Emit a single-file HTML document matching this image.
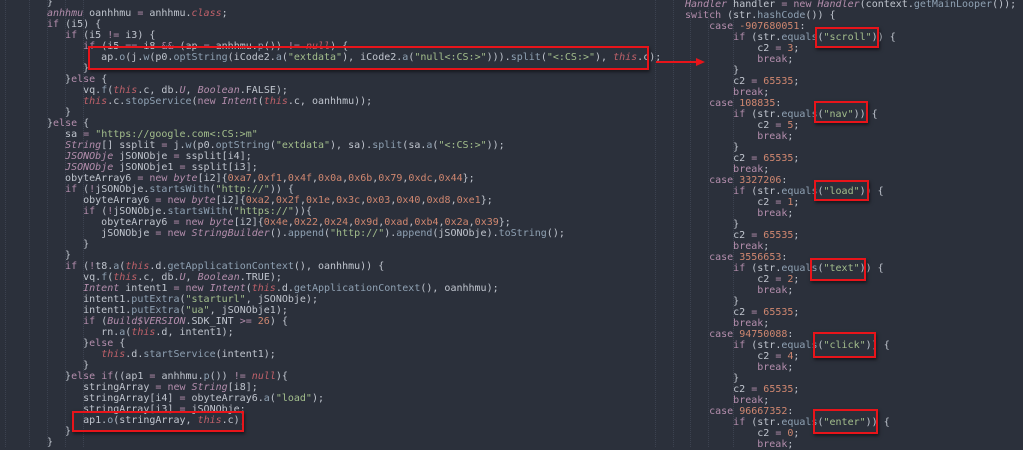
<!DOCTYPE html>
<html><head><meta charset="utf-8"><style>
html,body{margin:0;padding:0;width:1023px;height:447px;overflow:hidden;background:#2b303b;}
pre{position:absolute;margin:0;font-family:"DejaVu Sans Mono","Liberation Mono",monospace;font-size:10px;line-height:11px;color:#c0c5ce;white-space:pre;}
.k{color:#b48ead}.t{color:#b48ead;font-style:italic}.r{color:#bf616a;font-style:italic}.m{color:#8fa1b3}.s{color:#a3be8c}.n{color:#d08770}.o{color:#b48ead}
.box{position:absolute;border:2px solid #e8141a;box-sizing:border-box;box-shadow:1px 2px 3px rgba(0,0,0,.5);}
.g{position:absolute;top:0;height:447px;border-left:1px dotted #3c4250;}
</style></head><body>
<div class="g" style="left:5px"></div><div class="g" style="left:29px"></div><div class="g" style="left:47px"></div><div class="g" style="left:65px"></div><div class="g" style="left:83px"></div>
<div class="g" style="left:655px"></div><div class="g" style="left:673px"></div><div class="g" style="left:690px"></div><div class="g" style="left:708px"></div><div class="g" style="left:733px"></div>
<pre style="left:47px;top:-3px">}
<span class="t">anhhmu</span> oanhhmu <span class="o">=</span> anhhmu.<span class="r">class</span>;
<span class="k">if</span> (i5) {
   <span class="k">if</span> (i5 <span class="o">!=</span> i3) {
      <span class="k">if</span> (i5 <span class="o">==</span> i8 <span class="o">&amp;&amp;</span> (ap <span class="o">=</span> anhhmu.<span class="m">p</span>()) <span class="o">!=</span> <span class="r">null</span>) {
         ap.<span class="m">o</span>(j.<span class="m">w</span>(p0.<span class="m">optString</span>(iCode2.<span class="m">a</span>(<span class="s">"extdata"</span>), iCode2.<span class="m">a</span>(<span class="s">"null&lt;:CS:&gt;"</span>))).<span class="m">split</span>(<span class="s">"&lt;:CS:&gt;"</span>), <span class="r">this</span>.c);
      }
   }<span class="k">else</span> {
      vq.<span class="m">f</span>(<span class="r">this</span>.c, db.<span class="t">U</span>, <span class="t">Boolean</span>.FALSE);
      <span class="r">this</span>.c.<span class="m">stopService</span>(<span class="k">new</span> <span class="t">Intent</span>(<span class="r">this</span>.c, oanhhmu));
   }
}<span class="k">else</span> {
   sa <span class="o">=</span> <span class="s">"https://google.com&lt;:CS:&gt;m"</span>
   <span class="t">String</span>[] ssplit <span class="o">=</span> j.<span class="m">w</span>(p0.<span class="m">optString</span>(<span class="s">"extdata"</span>), sa).<span class="m">split</span>(sa.<span class="m">a</span>(<span class="s">"&lt;:CS:&gt;"</span>));
   <span class="t">JSONObje</span> jSONObje <span class="o">=</span> ssplit[i4];
   <span class="t">JSONObje</span> jSONObje1 <span class="o">=</span> ssplit[i3];
   obyteArray6 <span class="o">=</span> <span class="k">new</span> <span class="t">byte</span>[i2]{<span class="n">0xa7</span>,<span class="n">0xf1</span>,<span class="n">0x4f</span>,<span class="n">0x0a</span>,<span class="n">0x6b</span>,<span class="n">0x79</span>,<span class="n">0xdc</span>,<span class="n">0x44</span>};
   <span class="k">if</span> (<span class="o">!</span>jSONObje.<span class="m">startsWith</span>(<span class="s">"http://"</span>)) {
      obyteArray6 <span class="o">=</span> <span class="k">new</span> <span class="t">byte</span>[i2]{<span class="n">0xa2</span>,<span class="n">0x2f</span>,<span class="n">0x1e</span>,<span class="n">0x3c</span>,<span class="n">0x03</span>,<span class="n">0x40</span>,<span class="n">0xd8</span>,<span class="n">0xe1</span>};
      <span class="k">if</span> (<span class="o">!</span>jSONObje.<span class="m">startsWith</span>(<span class="s">"https://"</span>)){
         obyteArray6 <span class="o">=</span> <span class="k">new</span> <span class="t">byte</span>[i2]{<span class="n">0x4e</span>,<span class="n">0x22</span>,<span class="n">0x24</span>,<span class="n">0x9d</span>,<span class="n">0xad</span>,<span class="n">0xb4</span>,<span class="n">0x2a</span>,<span class="n">0x39</span>};
         jSONObje <span class="o">=</span> <span class="k">new</span> <span class="t">StringBuilder</span>().<span class="m">append</span>(<span class="s">"http://"</span>).<span class="m">append</span>(jSONObje).<span class="m">toString</span>();
      }
   }
   <span class="k">if</span> (<span class="o">!</span>t8.<span class="m">a</span>(<span class="r">this</span>.d.<span class="m">getApplicationContext</span>(), oanhhmu)) {
      vq.<span class="m">f</span>(<span class="r">this</span>.c, db.<span class="t">U</span>, <span class="t">Boolean</span>.TRUE);
      <span class="t">Intent</span> intent1 <span class="o">=</span> <span class="k">new</span> <span class="t">Intent</span>(<span class="r">this</span>.d.<span class="m">getApplicationContext</span>(), oanhhmu);
      intent1.<span class="m">putExtra</span>(<span class="s">"starturl"</span>, jSONObje);
      intent1.<span class="m">putExtra</span>(<span class="s">"ua"</span>, jSONObje1);
      <span class="k">if</span> (<span class="t">Build$VERSION</span>.SDK_INT <span class="o">&gt;=</span> <span class="n">26</span>) {
         rn.<span class="m">a</span>(<span class="r">this</span>.d, intent1);
      }<span class="k">else</span> {
         <span class="r">this</span>.d.<span class="m">startService</span>(intent1);
      }
   }<span class="k">else</span> <span class="k">if</span>((ap1 <span class="o">=</span> anhhmu.<span class="m">p</span>()) <span class="o">!=</span> <span class="r">null</span>){
      stringArray <span class="o">=</span> <span class="k">new</span> <span class="t">String</span>[i8];
      stringArray[i4] <span class="o">=</span> obyteArray6.<span class="m">a</span>(<span class="s">"load"</span>);
      stringArray[i3] <span class="o">=</span> jSONObje;
      ap1.<span class="m">o</span>(stringArray, <span class="r">this</span>.c);
   }
}</pre>
<pre style="left:685px;top:-1px"><span class="t">Handler</span> handler <span class="o">=</span> <span class="k">new</span> <span class="t">Handler</span>(context.<span class="m">getMainLooper</span>());
<span class="k">switch</span> (str.<span class="m">hashCode</span>()) {
    <span class="k">case</span> <span class="n">-907680051</span>:
        <span class="k">if</span> (str.<span class="m">equals</span>(<span class="s">"scroll"</span>)) {
            c2 <span class="o">=</span> <span class="n">3</span>;
            <span class="k">break</span>;
        }
        c2 <span class="o">=</span> <span class="n">65535</span>;
        <span class="k">break</span>;
    <span class="k">case</span> <span class="n">108835</span>:
        <span class="k">if</span> (str.<span class="m">equals</span>(<span class="s">"nav"</span>)) {
            c2 <span class="o">=</span> <span class="n">5</span>;
            <span class="k">break</span>;
        }
        c2 <span class="o">=</span> <span class="n">65535</span>;
        <span class="k">break</span>;
    <span class="k">case</span> <span class="n">3327206</span>:
        <span class="k">if</span> (str.<span class="m">equals</span>(<span class="s">"load"</span>)) {
            c2 <span class="o">=</span> <span class="n">1</span>;
            <span class="k">break</span>;
        }
        c2 <span class="o">=</span> <span class="n">65535</span>;
        <span class="k">break</span>;
    <span class="k">case</span> <span class="n">3556653</span>:
        <span class="k">if</span> (str.<span class="m">equals</span>(<span class="s">"text"</span>)) {
            c2 <span class="o">=</span> <span class="n">2</span>;
            <span class="k">break</span>;
        }
        c2 <span class="o">=</span> <span class="n">65535</span>;
        <span class="k">break</span>;
    <span class="k">case</span> <span class="n">94750088</span>:
        <span class="k">if</span> (str.<span class="m">equals</span>(<span class="s">"click"</span>)) {
            c2 <span class="o">=</span> <span class="n">4</span>;
            <span class="k">break</span>;
        }
        c2 <span class="o">=</span> <span class="n">65535</span>;
        <span class="k">break</span>;
    <span class="k">case</span> <span class="n">96667352</span>:
        <span class="k">if</span> (str.<span class="m">equals</span>(<span class="s">"enter"</span>)) {
            c2 <span class="o">=</span> <span class="n">0</span>;
            <span class="k">break</span>;</pre>
<div class="box" style="left:88px;top:46px;width:561px;height:24px"></div>
<div class="box" style="left:72px;top:411px;width:172px;height:21px"></div>
<div style="position:absolute;left:656px;top:61px;width:42px;height:2px;background:#e8141a"></div>
<div style="position:absolute;left:696px;top:58px;width:0;height:0;border-left:9px solid #e8141a;border-top:4px solid transparent;border-bottom:4px solid transparent"></div>
<div class="box" style="left:815px;top:27px;width:64px;height:21px"></div>
<div class="box" style="left:814px;top:101px;width:54px;height:22px"></div>
<div class="box" style="left:814px;top:180px;width:55px;height:21px"></div>
<div class="box" style="left:810px;top:258px;width:56px;height:23px"></div>
<div class="box" style="left:813px;top:332px;width:63px;height:26px"></div>
<div class="box" style="left:813px;top:409px;width:65px;height:25px"></div>
</body></html>
